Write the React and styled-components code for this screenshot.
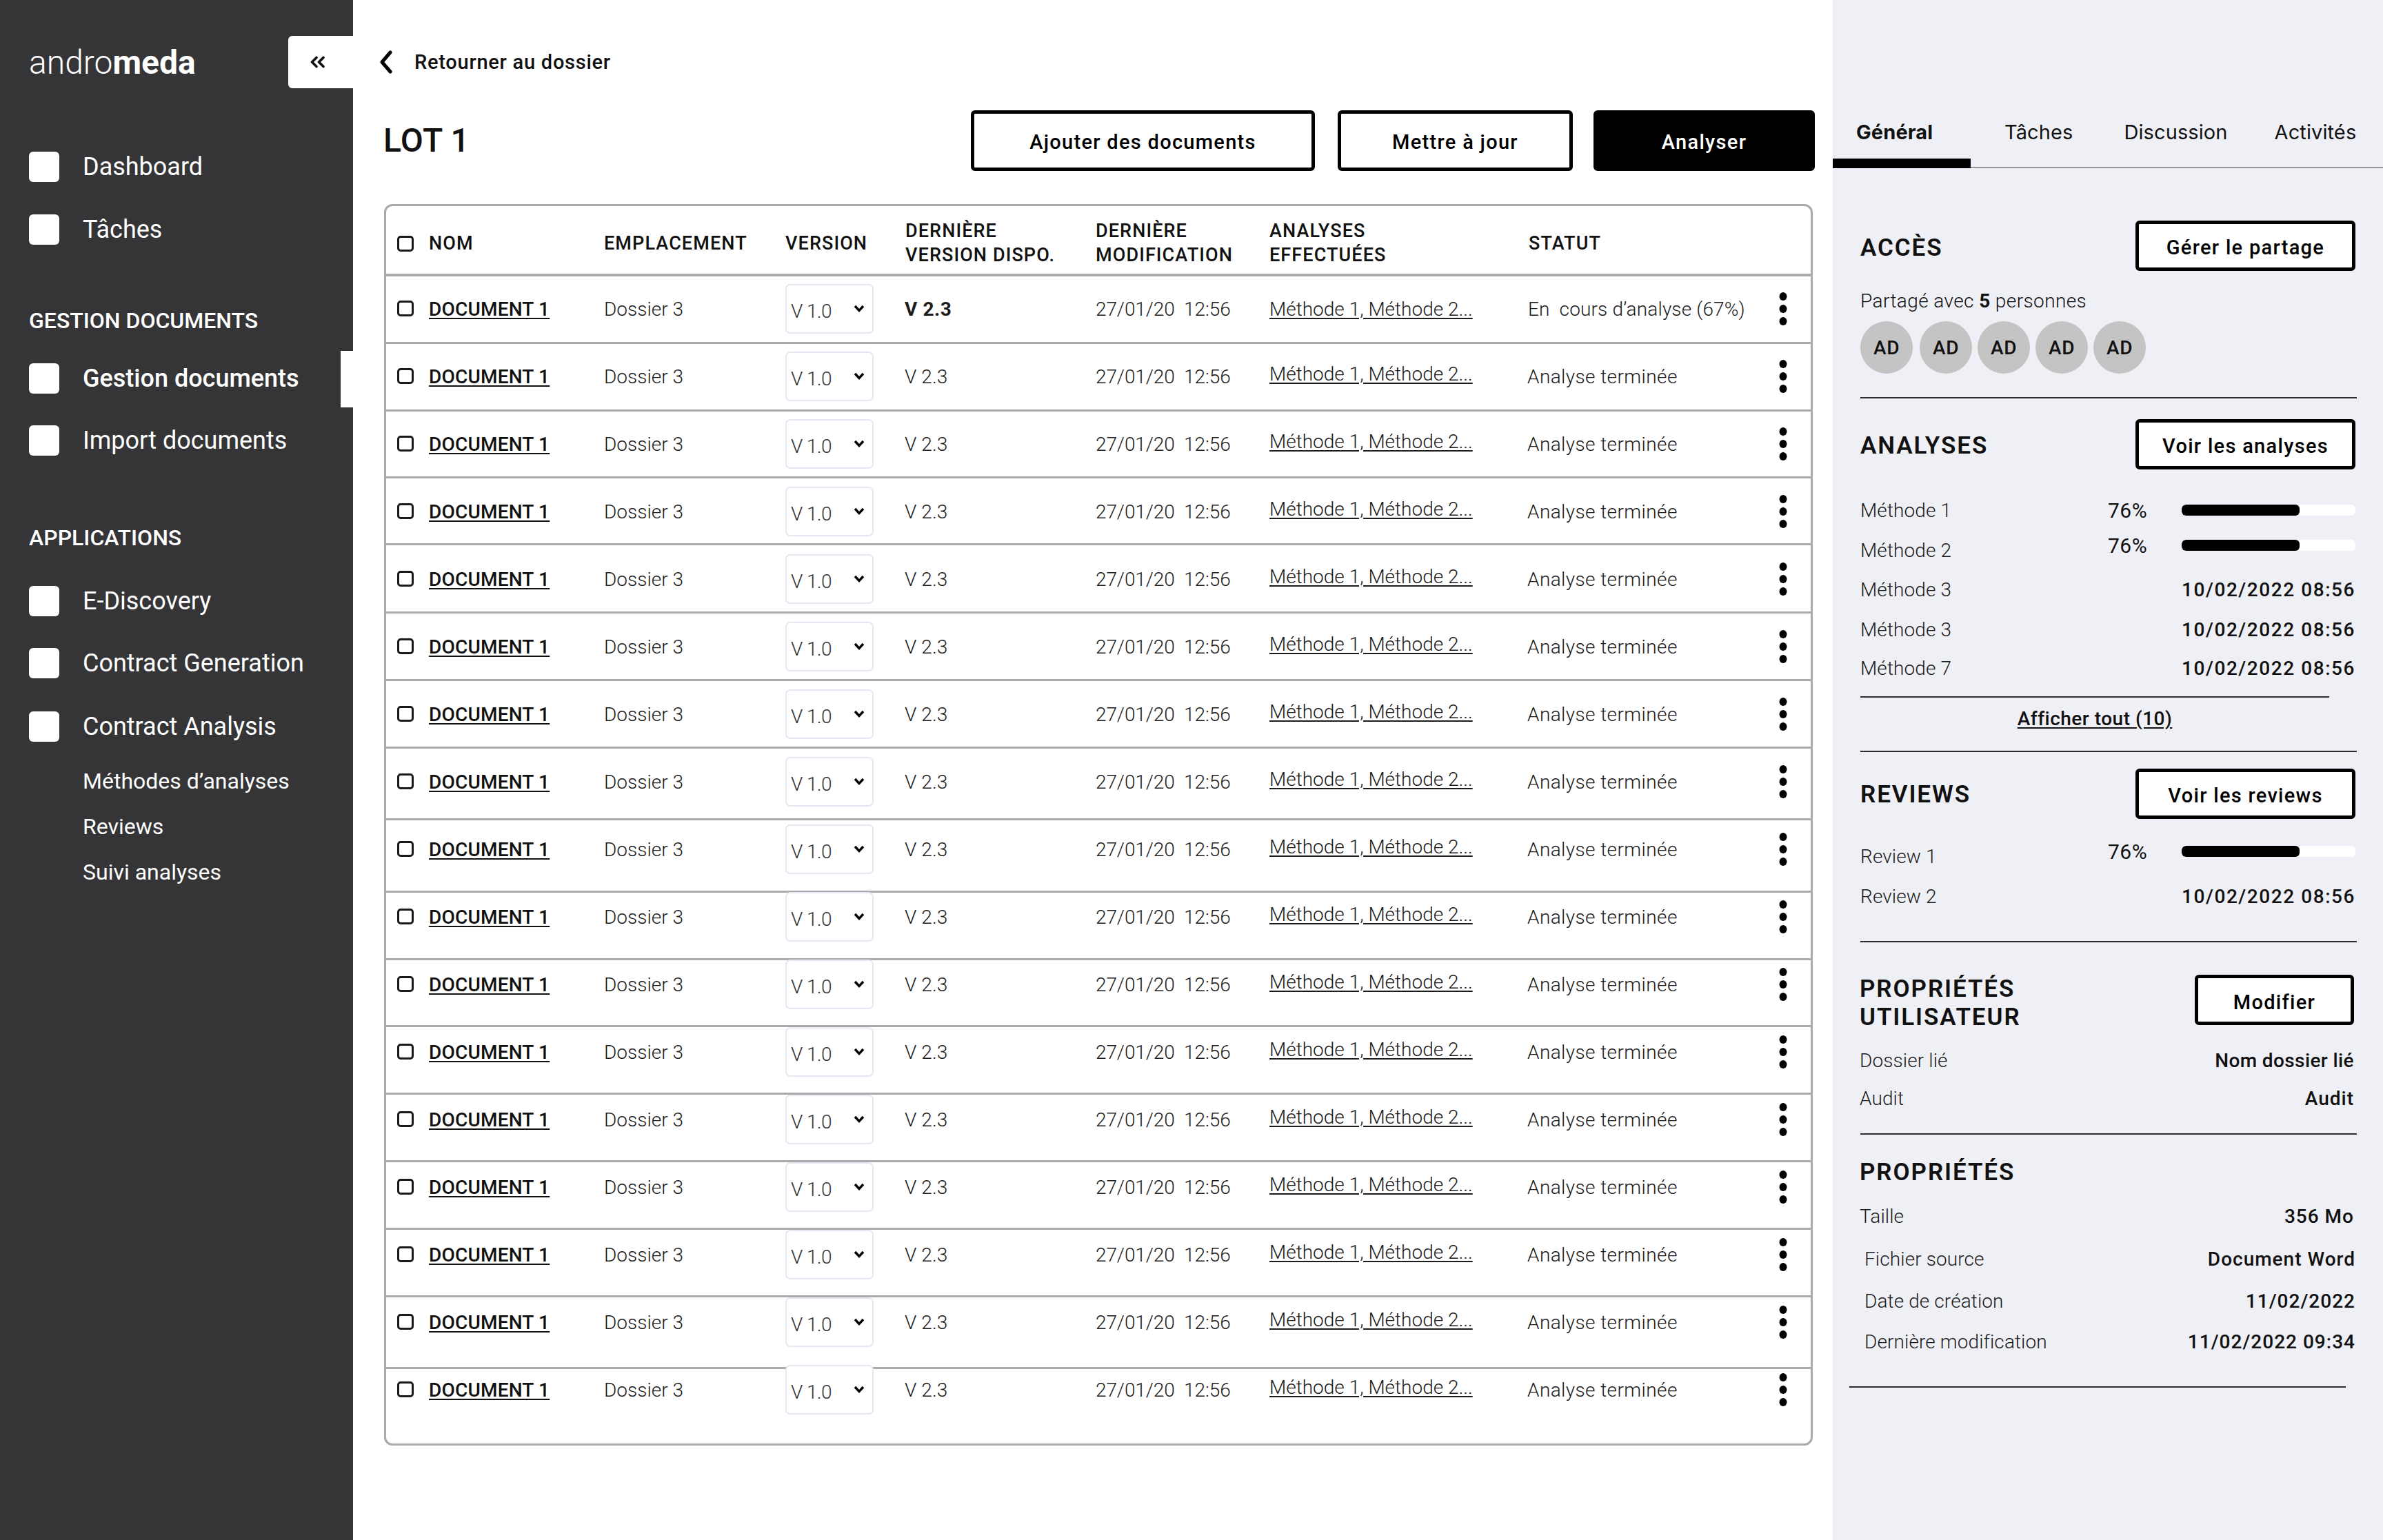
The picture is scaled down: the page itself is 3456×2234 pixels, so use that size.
import React from "react";
import styled, { createGlobalStyle } from "styled-components";

const GlobalStyle = createGlobalStyle`
  html, body { margin: 0; padding: 0; background: #fff; }
  body { font-family: "Roboto", "Liberation Sans", sans-serif; color: #111; }
  * { box-sizing: border-box; }
`;

const Page = styled.div`
  display: flex;
  width: 3456px;
  height: 2234px;
  overflow: hidden;
`;

/* sidebar */
const Sidebar = styled.aside`
  width: 512px;
  flex: none;
  background: #353537;
  color: #fff;
  padding-left: 42px;
  display: flex;
  flex-direction: column;
`;

const BrandRow = styled.div`
  display: flex;
  align-items: center;
  justify-content: space-between;
  height: 76px;
  margin-top: 52px;
`;

const Logo = styled.div`
  font-size: 48px;
  font-weight: 300;
  b { font-weight: 700; }
`;

const CollapseButton = styled.div`
  width: 94px;
  height: 76px;
  padding-right: 8px;
  background: #fff;
  color: #111;
  border-radius: 6px 0 0 6px;
  display: flex;
  align-items: center;
  justify-content: center;
`;

const NavItem = styled.div`
  position: relative;
  display: flex;
  align-items: center;
  height: 44px;
  margin-top: ${(p) => p.$mt}px;
  font-size: 36px;
  font-weight: ${(p) => (p.$active ? 500 : 400)};
  white-space: nowrap;
  ${(p) =>
    p.$active &&
    `&::after {
      content: "";
      position: absolute;
      right: 0;
      top: -18px;
      width: 18px;
      height: 82px;
      background: #fff;
    }`}
`;

const NavIcon = styled.span`
  width: 44px;
  height: 44px;
  border-radius: 6px;
  background: #fff;
  margin-right: 34px;
  flex: none;
`;

const NavHeading = styled.div`
  height: 44px;
  line-height: 44px;
  margin-top: ${(p) => p.$mt}px;
  font-size: 32px;
  font-weight: 500;
`;

const SubItem = styled.div`
  height: 40px;
  line-height: 40px;
  padding-left: 78px;
  margin-top: ${(p) => p.$mt}px;
  font-size: 32px;
`;

/* main column */
const Main = styled.main`
  flex: 1;
  min-width: 0;
  padding: 52px 26px 0 45px;
`;

const BackLink = styled.div`
  display: flex;
  align-items: center;
  height: 76px;
  font-size: 29px;
  font-weight: 500;
  letter-spacing: 0.75px;
  svg { margin: 0 28px 0 -10px; }
`;

const Toolbar = styled.div`
  display: flex;
  align-items: center;
  height: 88px;
  margin-top: 32px;
`;

const PageTitle = styled.h1`
  margin: 0 auto 0 -1px;
  font-size: 48px;
  font-weight: 500;
  line-height: 60px;
  letter-spacing: 0.3px;
`;

const Button = styled.button`
  width: ${(p) => p.$width}px;
  height: ${(p) => p.$height || 73}px;
  margin-left: ${(p) => p.$ml || 0}px;
  flex: none;
  border: 5px solid #000;
  border-radius: 6px;
  background: ${(p) => (p.$primary ? "#000" : "#fff")};
  color: ${(p) => (p.$primary ? "#fff" : "#000")};
  font-family: inherit;
  font-size: 29px;
  font-weight: 500;
  letter-spacing: 1.3px;
  padding: ${(p) => p.$pt ?? 4}px 0 0;
`;

const TableBox = styled.div`
  width: 2072px;
  height: 1801px;
  margin-top: 48px;
  border: 3px solid #aaa;
  border-radius: 12px;
  overflow: hidden;
`;

const columns = "46px 254px 263px 174px 276px 252px 376px 350px 40px";

const HeadRow = styled.div`
  display: grid;
  grid-template-columns: ${columns};
  align-items: center;
  height: 102px;
  padding: 10px 0 0 16px;
  border-bottom: 4px solid #aaa;
  font-size: 27px;
  font-weight: 500;
  line-height: 35px;
  letter-spacing: 1.1px;
`;

const Row = styled.div`
  display: grid;
  grid-template-columns: ${columns};
  grid-auto-rows: 46px;
  align-items: center;
  height: ${(p) => p.$height}px;
  padding: ${(p) => p.$top}px 0 0 16px;
  border-bottom: ${(p) => (p.$last ? "none" : "3px solid #aaa")};
  font-size: 28px;
  font-weight: 300;
  color: #1c1c1c;
  white-space: nowrap;
`;

const Check = styled.span`
  display: block;
  width: 24px;
  height: 23px;
  margin-bottom: ${(p) => p.$nudge || 0}px;
  border: 3px solid #1a1a1a;
  border-radius: 5px;
  background: #fff;
`;

const DocName = styled.span`
  font-weight: 500;
  color: #111;
  letter-spacing: 0.2px;
  text-decoration: underline;
  text-underline-offset: 3px;
`;

const SelectBox = styled.div`
  display: flex;
  align-items: center;
  justify-content: space-between;
  width: 128px;
  height: 72px;
  margin: -14px 0 -12px;
  padding: 7px 11px 0 6px;
  background: #fff;
  border: 2px solid #e5e8f2;
  border-radius: 7px;
  color: #333;
  letter-spacing: -0.6px;
  svg { margin-top: -8px; }
`;

const Latest = styled.span`
  margin-left: -1px;
  font-weight: ${(p) => (p.$bold ? 700 : 300)};
  letter-spacing: ${(p) => (p.$bold ? "0.6px" : "0.1px")};
`;

const DateCell = styled.span`
  white-space: pre;
  letter-spacing: -0.1px;
`;

const AnalysisLink = styled.span`
  text-decoration: underline;
  text-underline-offset: 3px;
  margin-bottom: ${(p) => (p.$first ? 0 : 8)}px;
`;

const StatusCell = styled.span`
  margin-left: ${(p) => (p.$first ? -1 : -2)}px;
  letter-spacing: ${(p) => (p.$first ? 0.15 : 0.4)}px;
  white-space: pre;
`;

/* right panel */
const Panel = styled.aside`
  width: 798px;
  flex: none;
  background: #eff0f5;
  display: flex;
  flex-direction: column;
`;

const TabBar = styled.div`
  display: flex;
  height: 244px;
  padding-top: 172px;
  border-bottom: 2px solid #999;
  font-family: "Inter", "Roboto", sans-serif;
  font-size: 29px;
  line-height: 40px;
`;

const Tab = styled.div`
  position: relative;
  margin-left: ${(p) => p.$ml}px;
  font-weight: ${(p) => (p.$active ? 700 : 400)};
  letter-spacing: 0.1px;
  ${(p) =>
    p.$active &&
    `width: 200px;
    padding-left: 34px;
    &::after {
      content: "";
      position: absolute;
      left: 0;
      top: 58px;
      width: 200px;
      height: 14px;
      background: #000;
    }`}
`;

const PanelBody = styled.div`
  padding: 0 40px;
`;

const SectionHead = styled.div`
  display: flex;
  align-items: ${(p) => (p.$top ? "flex-start" : "center")};
  justify-content: space-between;
  margin-top: ${(p) => p.$mt}px;
  margin-left: ${(p) => p.$ml || 0}px;
  margin-right: ${(p) => p.$mr || 0}px;
`;

const SectionTitle = styled.h2`
  margin: 0;
  padding-top: ${(p) => p.$pt || 0}px;
  font-size: 35px;
  font-weight: 600;
  line-height: 41px;
  letter-spacing: 1.9px;
`;

const Shared = styled.div`
  margin-top: 27px;
  font-size: 28px;
  font-weight: 300;
  line-height: 34px;
  letter-spacing: 0.4px;
  b { font-weight: 700; }
`;

const Avatars = styled.div`
  display: flex;
  gap: 8px;
  margin-top: 12px;
`;

const Avatar = styled.div`
  width: 76px;
  height: 76px;
  border-radius: 50%;
  background: #c4c4c4;
  display: flex;
  align-items: center;
  justify-content: center;
  font-size: 28px;
  font-weight: 500;
  letter-spacing: 0.5px;
  &:first-child { margin-right: 2px; }
`;

const Divider = styled.div`
  height: 2px;
  background: #2c2c2c;
  width: ${(p) => p.$width || 720}px;
  margin-top: ${(p) => p.$mt}px;
  margin-left: ${(p) => p.$ml || 0}px;
`;

const InfoRow = styled.div`
  display: flex;
  align-items: center;
  justify-content: space-between;
  height: 40px;
  margin-top: ${(p) => p.$mt}px;
  margin-left: ${(p) => p.$ml || 0}px;
  margin-right: ${(p) => p.$mr || 0}px;
  font-size: 28px;
`;

const Label = styled.span`
  font-weight: 300;
  color: #1c1c1c;
  letter-spacing: 0.1px;
`;

const Value = styled.span`
  font-weight: 500;
  letter-spacing: ${(p) => p.$ls ?? 1}px;
`;

const Percent = styled.span`
  font-size: 30px;
  font-weight: 400;
  letter-spacing: 0.5px;
`;

const Metric = styled.div`
  display: flex;
  align-items: center;
  justify-content: space-between;
  width: 359px;
  margin-bottom: ${(p) => p.$lift || 0}px;
`;

const Track = styled.div`
  width: 252px;
  height: 16px;
  border-radius: 6px;
  background: #fff;
  overflow: hidden;
`;

const Fill = styled.div`
  height: 100%;
  border-radius: 6px;
  background: #000;
`;

const ShowAll = styled.div`
  width: 680px;
  height: 40px;
  margin-top: 11px;
  font-size: 28px;
  font-weight: 500;
  line-height: 40px;
  letter-spacing: 0.5px;
  text-align: center;
  text-decoration: underline;
  text-underline-offset: 3px;
`;

const Chevrons = () => (
  <svg width="24" height="18" viewBox="0 0 24 18" fill="none" stroke="#111" strokeWidth="3.6" strokeLinecap="round" strokeLinejoin="round">
    <polyline points="10,2.5 3.5,9 10,15.5" />
    <polyline points="20,2.5 13.5,9 20,15.5" />
  </svg>
);

const BackArrow = () => (
  <svg width="26" height="34" viewBox="0 0 26 34" fill="none" stroke="#000" strokeWidth="5" strokeLinecap="round" strokeLinejoin="round">
    <polyline points="19,3 7,17 19,31" />
  </svg>
);

const SmallChevron = () => (
  <svg width="16" height="11" viewBox="0 0 16 11" fill="none" stroke="#000" strokeWidth="3.4">
    <polyline points="2,2 8,8.5 14,2" />
  </svg>
);

const Dots = () => (
  <svg width="12" height="50" viewBox="0 0 12 50" fill="#000" style={{ marginLeft: 13, marginBottom: 2 }}>
    <ellipse cx="6" cy="7" rx="5.5" ry="6" />
    <ellipse cx="6" cy="25" rx="5.5" ry="6" />
    <ellipse cx="6" cy="43" rx="5.5" ry="6" />
  </svg>
);

// y position of each row's bottom line in the reference
const LINES = [399.5, 497, 595, 692, 789, 888, 986, 1084, 1188, 1293, 1391, 1488, 1586, 1684, 1782, 1880, 1984];

const rows = LINES.map((line, i) => {
  const next = LINES[i + 1];
  const top = line + 1.5;
  return {
    id: i,
    height: next ? next - line : 110,
    top: 448.5 + 98 * i - 23 - top,
    last: !next,
  };
});

const STAMP = "10/02/2022 08:56";

const Progress = ({ lift }) => (
  <Metric $lift={lift}>
    <Percent>76%</Percent>
    <Track>
      <Fill style={{ width: "68%" }} />
    </Track>
  </Metric>
);

export default function App() {
  return (
    <Page>
      <GlobalStyle />
      <Sidebar>
        <BrandRow>
          <Logo>
            andro<b>meda</b>
          </Logo>
          <CollapseButton>
            <Chevrons />
          </CollapseButton>
        </BrandRow>
        <NavItem $mt={92}><NavIcon />Dashboard</NavItem>
        <NavItem $mt={47}><NavIcon />Tâches</NavItem>
        <NavHeading $mt={88}>GESTION DOCUMENTS</NavHeading>
        <NavItem $mt={40} $active><NavIcon />Gestion documents</NavItem>
        <NavItem $mt={46}><NavIcon />Import documents</NavItem>
        <NavHeading $mt={97}>APPLICATIONS</NavHeading>
        <NavItem $mt={48}><NavIcon />E-Discovery</NavItem>
        <NavItem $mt={46}><NavIcon />Contract Generation</NavItem>
        <NavItem $mt={48}><NavIcon />Contract Analysis</NavItem>
        <SubItem $mt={37}>Méthodes d’analyses</SubItem>
        <SubItem $mt={26}>Reviews</SubItem>
        <SubItem $mt={26}>Suivi analyses</SubItem>
      </Sidebar>

      <Main>
        <BackLink>
          <BackArrow />
          Retourner au dossier
        </BackLink>
        <Toolbar>
          <PageTitle>LOT 1</PageTitle>
          <Button $width={499} $height={88}>Ajouter des documents</Button>
          <Button $width={341} $height={88} $ml={33}>Mettre à jour</Button>
          <Button $width={321} $height={88} $ml={30} $primary>Analyser</Button>
        </Toolbar>
        <TableBox>
          <HeadRow>
            <Check />
            <span>NOM</span>
            <span>EMPLACEMENT</span>
            <span>VERSION</span>
            <span>DERNIÈRE<br />VERSION DISPO.</span>
            <span>DERNIÈRE<br />MODIFICATION</span>
            <span>ANALYSES<br />EFFECTUÉES</span>
            <span>STATUT</span>
          </HeadRow>
          {rows.map((r) => (
            <Row key={r.id} $height={r.height} $top={r.top} $last={r.last}>
              <Check $nudge={2} />
              <DocName>DOCUMENT 1</DocName>
              <span>Dossier 3</span>
              <SelectBox>V 1.0<SmallChevron /></SelectBox>
              <Latest $bold={r.id === 0}>V 2.3</Latest>
              <DateCell>27/01/20  12:56</DateCell>
              <AnalysisLink $first={r.id === 0}>Méthode 1, Méthode 2...</AnalysisLink>
              <StatusCell $first={r.id === 0}>
                {r.id === 0 ? "En  cours d’analyse (67%)" : "Analyse terminée"}
              </StatusCell>
              <Dots />
            </Row>
          ))}
        </TableBox>
      </Main>

      <Panel>
        <TabBar>
          <Tab $active $ml={0}>Général</Tab>
          <Tab $ml={49}>Tâches</Tab>
          <Tab $ml={74}>Discussion</Tab>
          <Tab $ml={68}>Activités</Tab>
        </TabBar>
        <PanelBody>
          <SectionHead $mt={76}>
            <SectionTitle $pt={5}>ACCÈS</SectionTitle>
            <Button $width={319}>Gérer le partage</Button>
          </SectionHead>
          <Shared>Partagé avec <b>5</b> personnes</Shared>
          <Avatars>
            <Avatar>AD</Avatar>
            <Avatar>AD</Avatar>
            <Avatar>AD</Avatar>
            <Avatar>AD</Avatar>
            <Avatar>AD</Avatar>
          </Avatars>
          <Divider $mt={34} />

          <SectionHead $mt={30}>
            <SectionTitle $pt={4}>ANALYSES</SectionTitle>
            <Button $width={319}>Voir les analyses</Button>
          </SectionHead>
          <InfoRow $mt={39}><Label>Méthode 1</Label><Progress /></InfoRow>
          <InfoRow $mt={18}><Label>Méthode 2</Label><Progress lift={14} /></InfoRow>
          <InfoRow $mt={17}><Label>Méthode 3</Label><Value $ls={1.55}>{STAMP}</Value></InfoRow>
          <InfoRow $mt={18}><Label>Méthode 3</Label><Value $ls={1.55}>{STAMP}</Value></InfoRow>
          <InfoRow $mt={16}><Label>Méthode 7</Label><Value $ls={1.55}>{STAMP}</Value></InfoRow>
          <Divider $mt={21} $width={680} />
          <ShowAll>Afficher tout (10)</ShowAll>
          <Divider $mt={26} />

          <SectionHead $mt={24}>
            <SectionTitle $pt={2}>REVIEWS</SectionTitle>
            <Button $width={319}>Voir les reviews</Button>
          </SectionHead>
          <InfoRow $mt={34}><Label>Review 1</Label><Progress lift={14} /></InfoRow>
          <InfoRow $mt={18}><Label>Review 2</Label><Value $ls={1.55}>{STAMP}</Value></InfoRow>
          <Divider $mt={45} />

          <SectionHead $mt={47} $top $ml={-1} $mr={2}>
            <SectionTitle>PROPRIÉTÉS<br />UTILISATEUR</SectionTitle>
            <Button $width={231} $pt={7}>Modifier</Button>
          </SectionHead>
          <InfoRow $mt={22} $ml={-1} $mr={2}><Label>Dossier lié</Label><Value $ls={0.4}>Nom dossier lié</Value></InfoRow>
          <InfoRow $mt={15} $ml={-1} $mr={2}><Label>Audit</Label><Value>Audit</Value></InfoRow>
          <Divider $mt={31} />

          <SectionHead $mt={34} $ml={-1}>
            <SectionTitle>PROPRIÉTÉS</SectionTitle>
          </SectionHead>
          <InfoRow $mt={23} $ml={-1} $mr={2}><Label>Taille</Label><Value>356 Mo</Value></InfoRow>
          <InfoRow $mt={22} $ml={6}><Label>Fichier source</Label><Value>Document Word</Value></InfoRow>
          <InfoRow $mt={21} $ml={6}><Label>Date de création</Label><Value>11/02/2022</Value></InfoRow>
          <InfoRow $mt={19} $ml={6}><Label>Dernière modification</Label><Value>11/02/2022 09:34</Value></InfoRow>
          <Divider $mt={45} $ml={-16} />
        </PanelBody>
      </Panel>
    </Page>
  );
}
